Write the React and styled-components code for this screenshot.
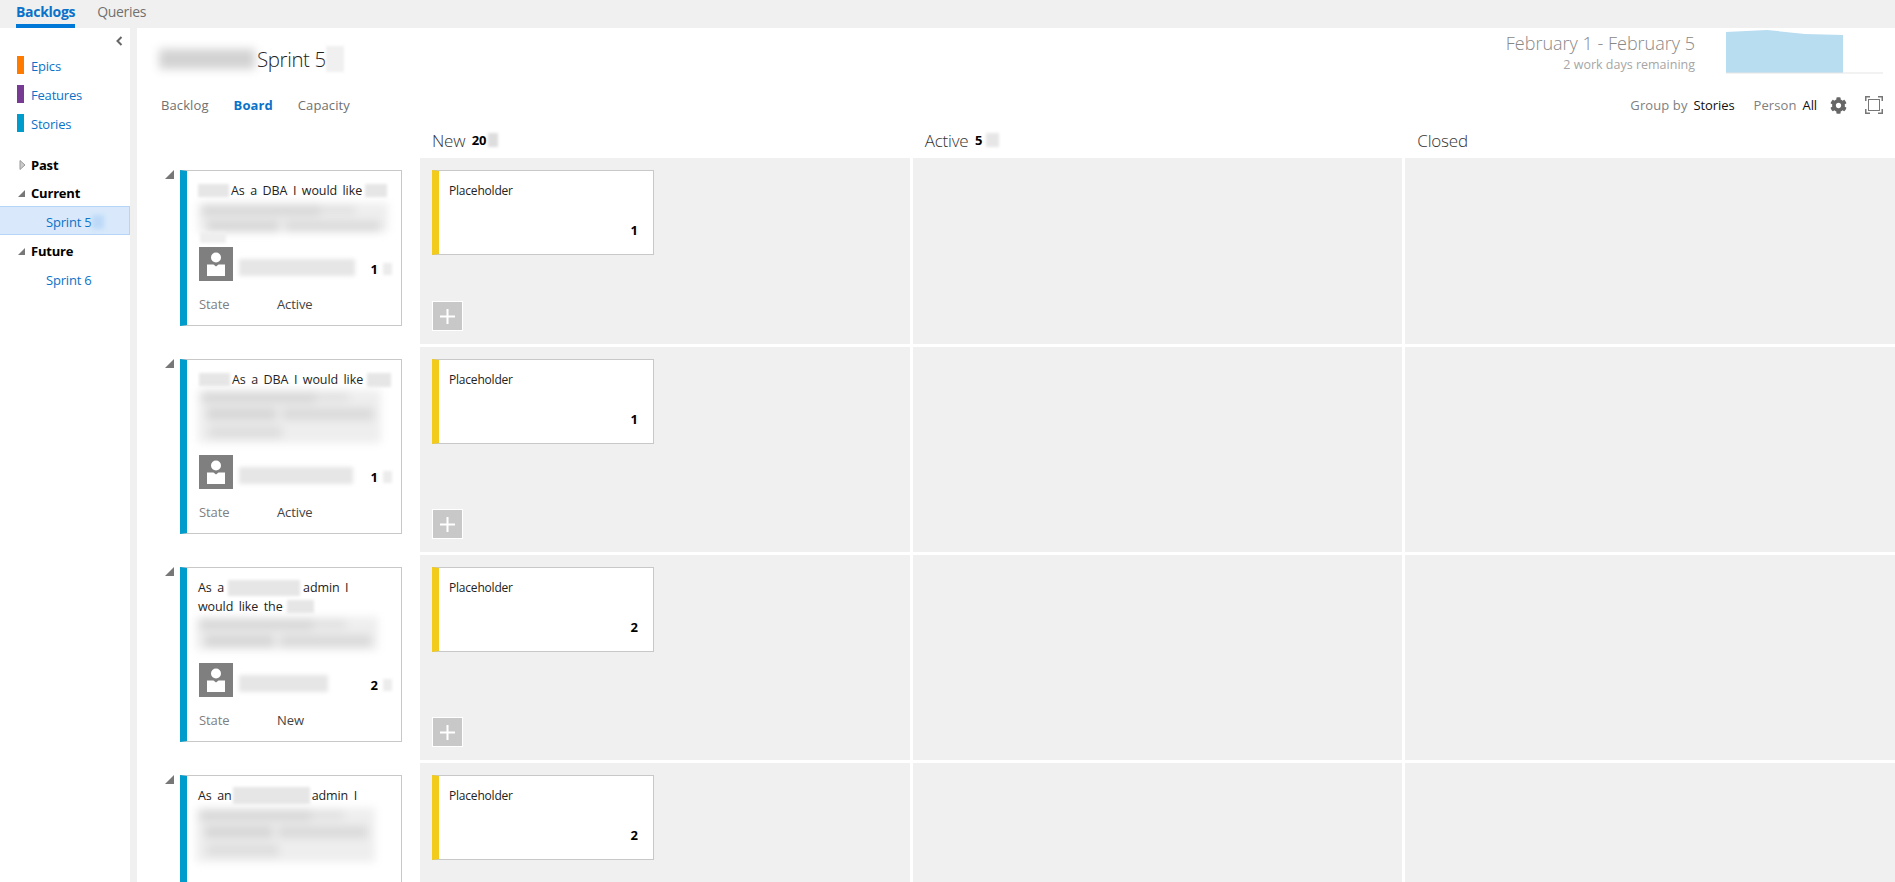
import React from 'react';
import styled, { createGlobalStyle } from 'styled-components';
import { FaCog } from 'react-icons/fa';

const FONT = '"Open Sans", "Noto Sans", "Liberation Sans", sans-serif';
const BLUE = '#0a72c9';

const GlobalStyle = createGlobalStyle`
  html, body { margin: 0; padding: 0; height: 100%; background: #fff; overflow: hidden; }
  #root { height: 100%; }
  * { box-sizing: border-box; }
`;

const Page = styled.div`
  display: flex;
  flex-direction: column;
  height: 882px;
  overflow: hidden;
  font-family: ${FONT};
  font-size: 13px;
  color: #222;
`;

const TopBar = styled.div`
  display: flex;
  gap: 22px;
  height: 28px;
  padding-left: 16px;
  background: #f0f0f0;
  flex: none;
`;

const TopTab = styled.div`
  height: 28px;
  line-height: 23px;
  font-size: 14px;
  letter-spacing: -0.3px;
  color: ${(p) => (p.$active ? BLUE : '#707070')};
  font-weight: ${(p) => (p.$active ? 700 : 400)};
  border-bottom: ${(p) => (p.$active ? '4px solid #0078d7' : 'none')};
`;

const Body = styled.div`
  display: flex;
  flex: 1;
  min-height: 0;
`;

const Sidebar = styled.nav`
  position: relative;
  width: 130px;
  flex: none;
  padding-top: 28px;
`;

const Collapse = styled.svg`
  position: absolute;
  top: 8px;
  left: 116px;
  width: 7px;
  height: 10px;
`;

const BacklogLink = styled.div`
  display: flex;
  align-items: center;
  height: 18px;
  margin-bottom: 11px;
  padding-left: 17px;
  gap: 7px;
  color: ${BLUE};
  letter-spacing: -0.2px;
`;

const BacklogName = styled.span`
  margin-top: 2px;
`;

const Swatch = styled.span`
  width: 7px;
  height: 18px;
  background: ${(p) => p.$color};
`;

const IterationHead = styled.div`
  display: flex;
  align-items: center;
  height: 18px;
  margin-top: ${(p) => p.$top}px;
  margin-bottom: 4px;
  padding-left: 18px;
  font-weight: 700;
  color: #000;
  letter-spacing: -0.2px;
`;

const HeadArrow = styled.svg`
  width: 8px;
  height: 10px;
  margin-right: 5px;
  flex: none;
`;

const SprintLink = styled.div`
  display: flex;
  align-items: center;
  height: 29px;
  padding: 2px 0 0 46px;
  color: ${BLUE};
  letter-spacing: -0.2px;
  background: ${(p) => (p.$selected ? '#d9e9fb' : 'transparent')};
  border: ${(p) => (p.$selected ? '1px solid #b5d5f8' : '1px solid transparent')};
  border-left: 0;
`;

const Splitter = styled.div`
  width: 7px;
  flex: none;
  background: #f0f0f0;
`;

const Main = styled.main`
  flex: 1;
  min-width: 0;
`;

const TitleRow = styled.div`
  display: flex;
  justify-content: space-between;
  height: 62px;
  padding: 0 12px 0 22px;
`;

const Title = styled.h1`
  display: flex;
  align-items: center;
  height: 30px;
  margin: 16px 0 0;
  font-size: 20.5px;
  font-weight: 300;
  color: #222;
  letter-spacing: -0.4px;
`;

const Smudge = styled.span`
  display: ${(p) => (p.$block ? 'block' : 'inline-block')};
  flex: none;
  width: ${(p) => p.$w}px;
  height: ${(p) => p.$h}px;
  margin: ${(p) => p.$m || '0'};
  vertical-align: middle;
  background: ${(p) => p.$tone || '#e6e6e6'};
  filter: blur(${(p) => p.$blur || 1.5}px);
`;

const TextBlur = styled(Smudge)`
  background:
    linear-gradient(#d8d8d8, #d8d8d8) 6% 2px / 62% 11px no-repeat,
    linear-gradient(#e0e0e0, #e0e0e0) 78% 3px / 20% 8px no-repeat,
    linear-gradient(#d6d6d6, #d6d6d6) 8% 18px / 38% 12px no-repeat,
    linear-gradient(#dadada, #dadada) 92% 18px / 50% 12px no-repeat,
    linear-gradient(#dedede, #dedede) 10% 36px / 40% 12px no-repeat,
    #eeeeee;
  filter: blur(4px);
`;

const Sprintbox = styled.div`
  display: flex;
  gap: 31px;
`;

const Dates = styled.div`
  display: flex;
  flex-direction: column;
  align-items: flex-end;
  padding-top: 2px;
`;

const DateRange = styled.div`
  font-size: 18px;
  line-height: 26px;
  font-weight: 300;
  color: #888;
`;

const Remaining = styled.div`
  font-size: 12.5px;
  line-height: 17px;
  color: #a6a6a6;
`;

const Burndown = styled.svg`
  width: 157px;
  height: 45px;
  margin-top: 1px;
`;

const NavRow = styled.div`
  display: flex;
  justify-content: space-between;
  align-items: center;
  height: 30px;
  padding: 0 12px 0 24px;
`;

const Tabs = styled.div`
  display: flex;
  gap: 25px;
  margin-top: -1px;
`;

const Tab = styled.div`
  color: ${(p) => (p.$active ? BLUE : '#707070')};
  font-weight: ${(p) => (p.$active ? 700 : 400)};
  letter-spacing: 0.1px;
`;

const Filters = styled.div`
  display: flex;
  align-items: center;
`;

const FilterLabel = styled.span`
  color: #808080;
  letter-spacing: 0.1px;
  margin-right: 6px;
`;

const FilterValue = styled.span`
  color: #111;
  letter-spacing: -0.1px;
  margin-right: ${(p) => p.$after}px;
`;

const Cog = styled(FaCog)`
  width: 17px;
  height: 17px;
  color: #666;
  margin-right: 18px;
`;

const Expand = styled.svg`
  width: 18px;
  height: 18px;
`;

const ColumnGrid = styled.div`
  display: grid;
  grid-template-columns: 280px repeat(3, 1fr);
  column-gap: 3px;
`;

const ColumnHeads = styled(ColumnGrid)`
  height: 38px;
  align-items: center;
  padding-top: 2px;
`;

const ColumnHead = styled.div`
  display: flex;
  align-items: center;
  padding-left: 12px;
  font-size: 17px;
  font-weight: 300;
  color: #333;
  letter-spacing: -0.2px;
`;

const ColumnCount = styled.span`
  margin-left: 6.5px;
  font-size: 13px;
  font-weight: 700;
  color: #000;
`;

const Board = styled.div`
  display: flex;
  flex-direction: column;
  gap: 3px;
`;

const StoryCell = styled.div`
  position: relative;
  padding: 12px 15px 18px 43px;
`;

const Twisty = styled.svg`
  position: absolute;
  top: 12px;
  left: 28px;
  width: 9px;
  height: 9px;
`;

const Card = styled.div`
  border: 1px solid #c8c8c8;
  border-left: 7px solid ${(p) => p.$color};
  background: #fff;
  color: #222;
`;

const StoryCard = styled(Card)`
  min-height: ${(p) => p.$minHeight || 0}px;
  padding: 10px 9px 12px 11px;
`;

const StoryLine = styled.div`
  display: flex;
  align-items: center;
  height: 19px;
  white-space: pre;
  font-size: 12.5px;
  letter-spacing: -0.1px;
  word-spacing: 2.4px;
`;

const OwnerRow = styled.div`
  display: flex;
  align-items: center;
  height: 34px;
  margin-top: ${(p) => p.$top}px;
  padding-left: 1px;
`;

const Avatar = styled.svg`
  width: 34px;
  height: 34px;
  flex: none;
`;

const Points = styled.span`
  margin: 9px 0 0 auto;
  font-weight: 700;
  color: #000;
`;

const StateRow = styled.div`
  display: flex;
  height: 18px;
  line-height: 18px;
  margin-top: 14px;
  padding-left: 1px;
  letter-spacing: -0.1px;
`;

const StateLabel = styled.span`
  width: 78px;
  color: #808080;
`;

const StateValue = styled.span`
  color: #444;
`;

const Lane = styled.div`
  display: flex;
  flex-direction: column;
  justify-content: space-between;
  padding: 12px 12px 13px;
  background: #f0f0f0;
`;

const TaskCard = styled(Card)`
  display: flex;
  flex-direction: column;
  width: 222px;
  height: 85px;
  padding: 10px 15px 0 10px;
`;

const TaskTitle = styled.div`
  height: 19px;
  line-height: 19px;
  font-size: 12px;
  letter-spacing: -0.2px;
`;

const TaskPoints = styled.div`
  margin-top: 21px;
  text-align: right;
  font-weight: 700;
  color: #000;
`;

const AddButton = styled.button`
  display: flex;
  align-items: center;
  justify-content: center;
  width: 31px;
  height: 30px;
  padding: 0;
  background: #c8c8c8;
  border: 1px solid #fff;
`;

const stories = [
  {
    points: 1,
    state: 'Active',
    ownerTop: 4,
    nameWidth: 116,
    lines: [
      <StoryLine key="a">
        <Smudge $w={31} $h={13} $m="0 2px 0 0" />
        As a DBA I would like
        <Smudge $w={22} $h={13} $m="0 0 0 3px" />
      </StoryLine>,
    ],
    blur: (
      <>
        <TextBlur $block $w={190} $h={29} $m="3px 0 0 0" />
        <Smudge $block $w={26} $h={11} $m="0 0 0 2px" $tone="#eee" />
      </>
    ),
  },
  {
    points: 1,
    state: 'Active',
    ownerTop: 12,
    nameWidth: 114,
    lines: [
      <StoryLine key="a">
        <Smudge $w={31} $h={13} $m="0 2px 0 1px" />
        As a DBA I would like
        <Smudge $w={24} $h={14} $m="0 0 0 4px" />
      </StoryLine>,
    ],
    blur: <TextBlur $block $w={183} $h={53} $m="1px 0 0 0" />,
  },
  {
    points: 2,
    state: 'New',
    ownerTop: 13,
    nameWidth: 89,
    lines: [
      <StoryLine key="a">
        As a
        <Smudge $w={72} $h={16} $m="0 3px 0 4px" />
        admin I
      </StoryLine>,
      <StoryLine key="b">
        would like the
        <Smudge $w={27} $h={13} $m="0 0 0 4px" />
      </StoryLine>,
    ],
    blur: <TextBlur $block $w={182} $h={33} $m="1px 0 0 -2px" />,
  },
  {
    // this card runs off the bottom of the page, its owner row never shows
    points: 2,
    minHeight: 175,
    lines: [
      <StoryLine key="a">
        As an
        <Smudge $w={77} $h={17} $m="0 2px 0 1px" />
        admin I
      </StoryLine>,
    ],
    blur: <TextBlur $block $w={179} $h={54} $m="3px 0 0 -2px" />,
  },
];

const AvatarIcon = () => (
  <Avatar viewBox="0 0 34 34">
    <rect width="34" height="34" fill="#7f7f7f" />
    <circle cx="17" cy="10.500" r="5" fill="#fff" />
    <path d="M8 17.500h6.500l2.500 2 2.500-2H26V29H8z" fill="#fff" />
  </Avatar>
);

const StoryRow = ({ story }) => (
  <ColumnGrid>
    <StoryCell>
      <Twisty viewBox="0 0 9 9">
        <path d="M9 0v9H0z" fill="#777" />
      </Twisty>
      <StoryCard $color="#009ccc" $minHeight={story.minHeight}>
        {story.lines}
        {story.blur}
        {story.state && (
          <>
            <OwnerRow $top={story.ownerTop}>
              <AvatarIcon />
              <Smudge $w={story.nameWidth} $h={17} $m="6px 0 0 6px" $tone="#e6e6e6" $blur={2} />
              <Points>{story.points}</Points>
              <Smudge $w={9} $h={12} $m="9px 0 0 5px" $tone="#ececec" />
            </OwnerRow>
            <StateRow>
              <StateLabel>State</StateLabel>
              <StateValue>{story.state}</StateValue>
            </StateRow>
          </>
        )}
      </StoryCard>
    </StoryCell>
    <Lane>
      <TaskCard $color="#f2cb1d">
        <TaskTitle>Placeholder</TaskTitle>
        <TaskPoints>{story.points}</TaskPoints>
      </TaskCard>
      <AddButton aria-label="Add">
        <svg width="15" height="15" viewBox="0 0 15 15">
          <path d="M6.500 0h2v6.500H15v2H8.500V15h-2V8.500H0v-2h6.500z" fill="#fff" />
        </svg>
      </AddButton>
    </Lane>
    <Lane />
    <Lane />
  </ColumnGrid>
);

const App = () => (
  <Page>
    <GlobalStyle />
    <TopBar>
      <TopTab $active>Backlogs</TopTab>
      <TopTab>Queries</TopTab>
    </TopBar>
    <Body>
      <Sidebar>
        <Collapse viewBox="0 0 7 10">
          <path d="M5.500 1 1.500 5l4 4" fill="none" stroke="#666" strokeWidth="2" />
        </Collapse>
        <BacklogLink><Swatch $color="#ff7b00" /><BacklogName>Epics</BacklogName></BacklogLink>
        <BacklogLink><Swatch $color="#773b93" /><BacklogName>Features</BacklogName></BacklogLink>
        <BacklogLink><Swatch $color="#009ccc" /><BacklogName>Stories</BacklogName></BacklogLink>
        <IterationHead $top={24}>
          <HeadArrow viewBox="0 0 8 10"><path d="M2 0.500 7 5l-5 4.500z" fill="#ccc" stroke="#999" /></HeadArrow>
          Past
        </IterationHead>
        <IterationHead $top={10}>
          <HeadArrow viewBox="0 0 8 10"><path d="M7 2v7H0z" fill="#777" /></HeadArrow>
          Current
        </IterationHead>
        <SprintLink $selected>
          Sprint 5
          <Smudge $w={12} $h={14} $tone="#bcd9f7" $blur={2} />
        </SprintLink>
        <IterationHead $top={7}>
          <HeadArrow viewBox="0 0 8 10"><path d="M7 2v7H0z" fill="#777" /></HeadArrow>
          Future
        </IterationHead>
        <SprintLink>Sprint 6</SprintLink>
      </Sidebar>
      <Splitter />
      <Main>
        <TitleRow>
          <Title>
            <Smudge $w={96} $h={20} $tone="#d2d2d2" $blur={5} $m="0 2px 0 0" />
            Sprint 5
            <Smudge $w={18} $h={26} $tone="#f0f0f0" />
          </Title>
          <Sprintbox>
            <Dates>
              <DateRange>February 1 - February 5</DateRange>
              <Remaining>2 work days remaining</Remaining>
            </Dates>
            <Burndown viewBox="0 0 157 45">
              <path d="M0 3 41 1 79 5 117 6V44H0z" fill="#b8dcf0" />
              <rect y="43.500" width="157" height="1" fill="#e6e6e6" />
            </Burndown>
          </Sprintbox>
        </TitleRow>
        <NavRow>
          <Tabs>
            <Tab>Backlog</Tab>
            <Tab $active>Board</Tab>
            <Tab>Capacity</Tab>
          </Tabs>
          <Filters>
            <FilterLabel>Group by</FilterLabel>
            <FilterValue $after={19}>Stories</FilterValue>
            <FilterLabel>Person</FilterLabel>
            <FilterValue $after={13}>All</FilterValue>
            <Cog />
            <Expand viewBox="0 0 18 18">
              <path d="M.75 5V.75H5M13 .75h4.250V5M17.250 13v4.250H13M5 17.250H.75V13" fill="none" stroke="#777" strokeWidth="1.500" />
              <rect x="3.500" y="3.500" width="11" height="11" fill="none" stroke="#777" />
            </Expand>
          </Filters>
        </NavRow>
        <ColumnHeads>
          <span />
          <ColumnHead>New<ColumnCount>20</ColumnCount><Smudge $w={10} $h={14} $tone="#ddd" $m="0 0 0 2px" /></ColumnHead>
          <ColumnHead>Active<ColumnCount>5</ColumnCount><Smudge $w={13} $h={14} $tone="#e6e6e6" $m="0 0 0 4px" /></ColumnHead>
          <ColumnHead>Closed</ColumnHead>
        </ColumnHeads>
        <Board>
          {stories.map((story, i) => <StoryRow key={i} story={story} />)}
        </Board>
      </Main>
    </Body>
  </Page>
);

export default App;
